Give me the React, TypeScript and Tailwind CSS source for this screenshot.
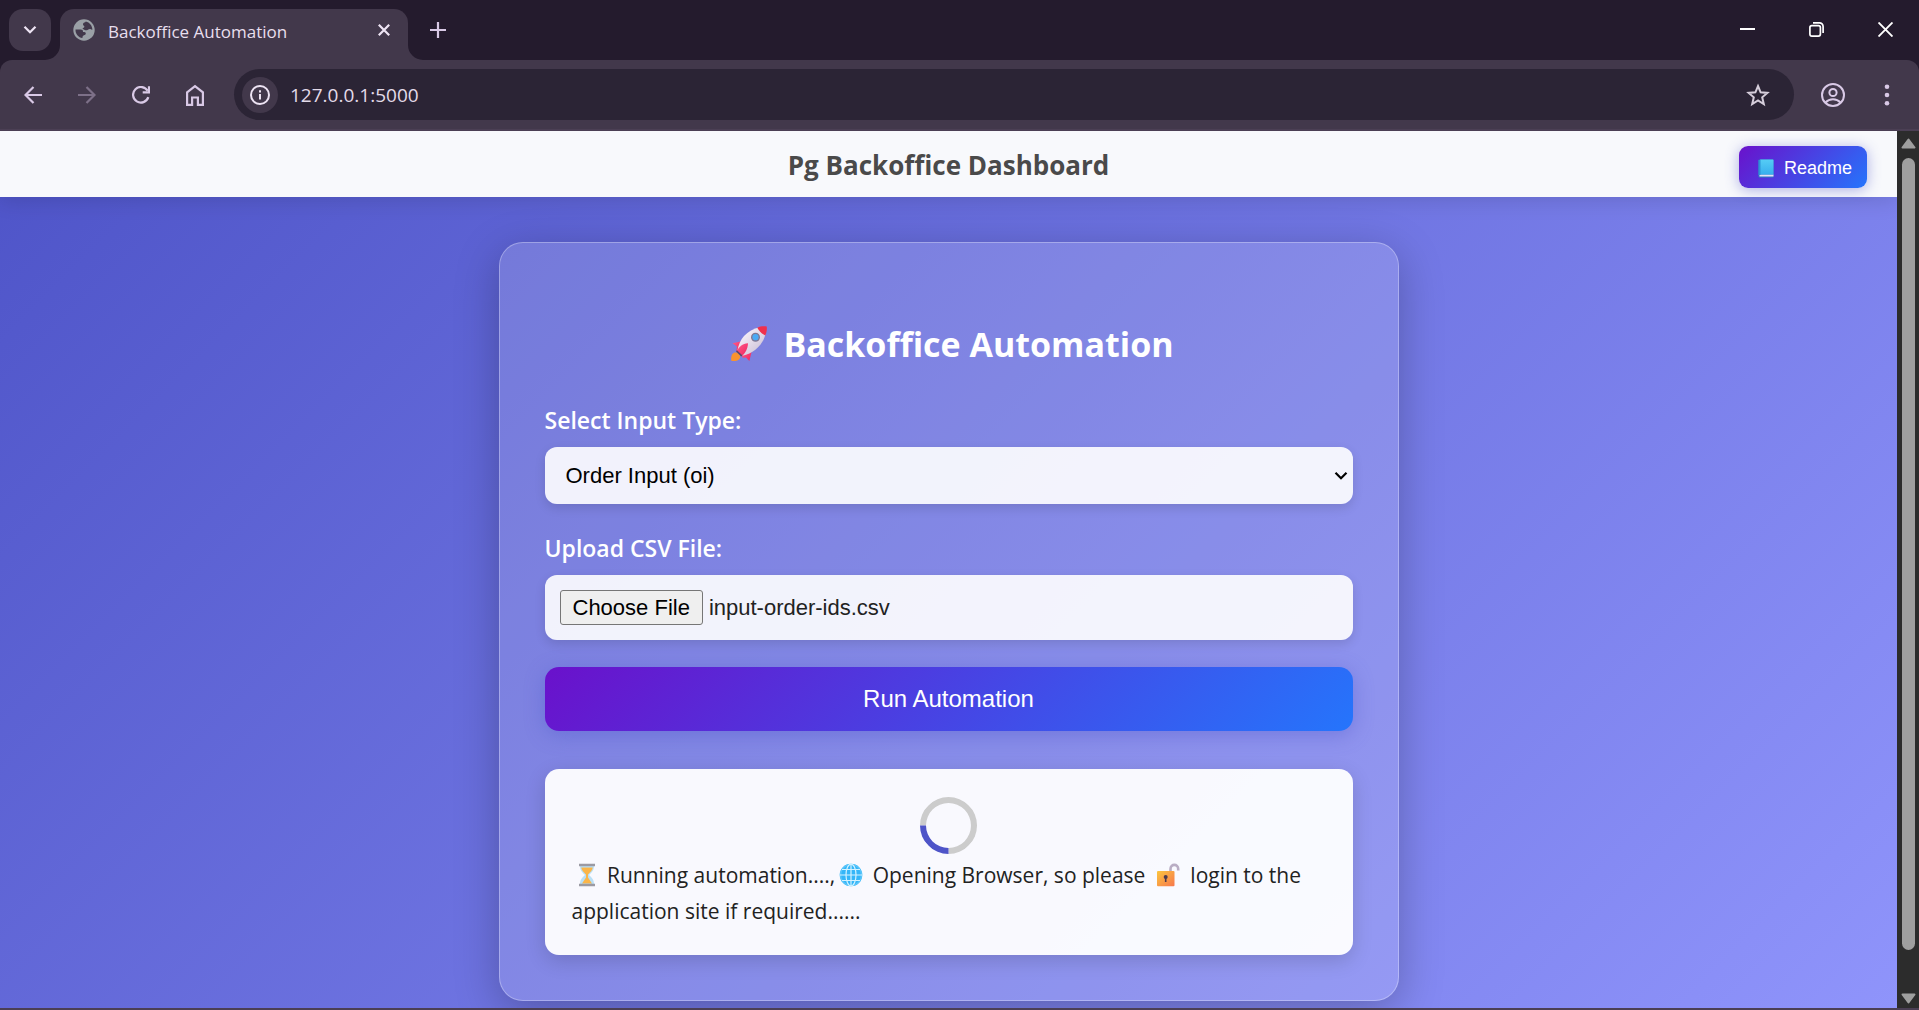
import { useEffect, useRef, type ReactNode } from "react";

const stroke = {
  fill: "none",
  stroke: "currentColor",
  strokeWidth: 2,
} as const;

function ChevronDown({ className }: { className: string }) {
  return (
    <svg viewBox="0 0 14 10" className={className} {...stroke} strokeWidth={2.2} aria-hidden="true">
      <path d="M1.500 1.700 7 7.200l5.500-5.500" />
    </svg>
  );
}

function GlobeFavicon() {
  return (
    <svg viewBox="0 0 22 22" className="size-[22px] shrink-0" aria-hidden="true">
      <circle cx="11" cy="11" r="10.700" fill="#9aa0a6" />
      <path
        d="M2.500 10.500c2.600 0 5.200 0 6.300.2 1 .3 1.200 1 1.200 2.300 1.500 0 3 .1 2.800 1.800-.1 1.200-1.800 1.300-2.600 1.900-.7.500-.7 1.500-.8 2.400C5.500 18.500 2.300 15 2.500 10.500Z"
        fill="#42384b"
      />
      <path
        d="M12.800 2.600c-.4 1.200-2.600 1-2.800 2.300-.2 1.500 1.200 1.500 1.400 2.700.2 1.500-1.800 1.100-1.900 2.400 1.600.2 2.400 1.700 4.200 1.300 1.500-.4 2-1.600 3.600-1.300.8.200 1.400.8 2.100.7-.1-3.700-2.700-7.300-6.600-8.100Z"
        fill="#42384b"
      />
    </svg>
  );
}

function RocketIcon() {
  return (
    <svg viewBox="0 0 36 36" className="size-9 shrink-0" aria-hidden="true">
      <defs>
        <linearGradient id="rocketBody" x1="0" y1="0" x2="1" y2="1">
          <stop offset="0.200" stopColor="#f6eff8" />
          <stop offset="1" stopColor="#c4b8d0" />
        </linearGradient>
        <linearGradient id="rocketFin" x1="0" y1="0" x2="1" y2="1">
          <stop offset="0" stopColor="#ff5c8a" />
          <stop offset="1" stopColor="#f0245f" />
        </linearGradient>
      </defs>
      <path d="M.3 34.800c-.5-3.300.1-7.300 3.200-8.200 2.600-.7 6.700 2.500 5.500 5.300C7.500 34.800 3.500 35.500.3 34.800Z" fill="#f8932f" />
      <path d="M1.500 17.300 9.500 15.500l2 3-4 7.500-2.200-1.200.7-4.300Z" fill="url(#rocketFin)" />
      <path d="M18.300 35 20.500 26.500l-3-2.500-7 5.200 1.200 2.600 3.300-.3Z" fill="url(#rocketFin)" />
      <path d="M6.500 24.500C8 13.500 15.500 4 29 1.200l5.800 5.500C32.500 18.500 23 27.500 11.500 29.700Z" fill="url(#rocketBody)" />
      <path d="M35.700.4C32 .1 28.800.4 26.300 1.700c1.700 3.300 4.700 6.200 8 7.700C35.600 6.700 36.100 3.500 35.700.4Z" fill="#f0304c" />
      <path d="M6 25c1.500-3.700 5.500-7.500 11-7.800-.2 5.300-2.500 9.800-6 12.500Z" fill="url(#rocketFin)" />
      <path d="m5 25.500 5.200 5 1.300-.9L6 24.300Z" fill="#5c4864" />
      <circle cx="24.500" cy="11.200" r="4.500" fill="#7f7793" />
      <circle cx="24.500" cy="11.200" r="3.100" fill="#4aaaf5" />
    </svg>
  );
}

function BookIcon() {
  return (
    <svg viewBox="0 0 16 19" className="h-[19px] w-4 shrink-0" aria-hidden="true">
      <defs>
        <linearGradient id="bookCover" x1="0" y1="0" x2="0" y2="1">
          <stop offset="0" stopColor="#55cdf5" />
          <stop offset="1" stopColor="#38aeee" />
        </linearGradient>
      </defs>
      <rect x="0.500" y="0.500" width="15" height="18" rx="1" fill="#2b7fc4" />
      <path d="M1.500 15.500h14v2h-14z" fill="#e6dff5" />
      <rect x="2" y="0.500" width="13.500" height="15" rx="0.600" fill="url(#bookCover)" />
      <path d="M.5 1h2v15h-2z" fill="#2d93d6" />
    </svg>
  );
}

function HourglassIcon() {
  return (
    <svg viewBox="0 0 24 24" className="mx-[3px] inline-block size-6 -translate-y-0.5 align-middle" aria-hidden="true">
      <path d="M5 2.500h14c0 5-2 6.500-5 9.500 3 3 5 4.500 5 9.500H5c0-5 2-6.500 5-9.500-3-3-5-4.500-5-9.500Z" fill="#b9e0f7" />
      <path d="M6.200 4.500h11.600c-.5 3-2.500 4.700-4.800 7v3l4 6h-10l4-6v-3c-2.300-2.300-4.300-4-4.800-7Z" fill="#fbb548" />
      <path d="M4 .8h16v2.400H4zM4 20.800h16v2.400H4z" fill="#9b9aa3" />
    </svg>
  );
}

function WebIcon() {
  return (
    <svg viewBox="0 0 24 24" className="mx-1 inline-block size-6 -translate-y-0.5 align-middle" aria-hidden="true">
      <circle cx="12" cy="12" r="11.300" fill="#35b6f8" />
      <g fill="none" stroke="#d3f2ff" strokeWidth="1.200">
        <circle cx="12" cy="12" r="10.500" stroke="#5cc6fa" />
        <ellipse cx="12" cy="12" rx="5" ry="10.800" />
        <path d="M12 1v22M1 12h22M3 6.500h18M3 17.500h18" />
      </g>
    </svg>
  );
}

function UnlockedIcon() {
  return (
    <svg viewBox="0 0 24 24" className="mx-[5px] inline-block size-6 -translate-y-0.5 align-middle" aria-hidden="true">
      <defs>
        <linearGradient id="lockBody" x1="0" y1="0" x2="1" y2="1">
          <stop offset="0" stopColor="#fbc63f" />
          <stop offset="1" stopColor="#f7774d" />
        </linearGradient>
      </defs>
      <path d="M14.500 9V6c0-5.500 7.700-5.500 7.700 0v1.500" fill="none" stroke="#b9adc4" strokeWidth="2.600" />
      <rect x="1" y="8" width="17.500" height="15.300" rx="1" fill="url(#lockBody)" />
      <circle cx="9.700" cy="14" r="2" fill="#4b3a4f" />
      <path d="M8.900 14.500h1.600v4.500h-1.600z" fill="#4b3a4f" />
    </svg>
  );
}

function ToolButton({ label, children, dim }: { label: string; children: ReactNode; dim?: boolean }) {
  return (
    <button
      aria-label={label}
      className={
        dim
          ? "flex size-[54px] items-center justify-center text-[#7d7088]"
          : "flex size-[54px] items-center justify-center text-[#d9c9e6]"
      }
    >
      {children}
    </button>
  );
}

function TabStrip() {
  return (
    <div className="flex h-[60px] items-start bg-[#241b2d] pl-[9px]">
      <button aria-label="Search tabs" className="mt-[9px] flex size-[42px] items-center justify-center rounded-[14px] bg-[#42384b] text-[#eee4f4]">
        <ChevronDown className="h-[10px] w-[14px]" />
      </button>
      <div className="relative mt-[9px] ml-[9px] flex h-[51px] w-[348px] items-center rounded-t-[14px] bg-[#42384b] pr-[14px] pb-[9px] pl-[13px]">
        <svg viewBox="0 0 15 15" className="absolute bottom-0 -left-[15px] size-[15px]" aria-hidden="true">
          <path d="M15 0v15H0A15 15 0 0 0 15 0Z" fill="#42384b" />
        </svg>
        <svg viewBox="0 0 15 15" className="absolute -right-[15px] bottom-0 size-[15px]" aria-hidden="true">
          <path d="M0 0v15h15A15 15 0 0 1 0 0Z" fill="#42384b" />
        </svg>
        <GlobeFavicon />
        <span className="ml-[13px] flex-1 pt-1 text-[17px] leading-6 whitespace-nowrap text-[#e8dfee]">Backoffice Automation</span>
        <button aria-label="Close tab" className="flex size-5 items-center justify-center text-[#eee4f4]">
          <svg viewBox="0 0 12 12" className="size-3" {...stroke} strokeWidth={2.200}>
            <path d="m.8.8 10.400 10.400M11.200.8.8 11.200" />
          </svg>
        </button>
      </div>
      <button aria-label="New tab" className="mt-[15px] ml-[15px] flex size-[30px] items-center justify-center text-[#d9c9e6]">
        <svg viewBox="0 0 16 16" className="size-4" {...stroke} strokeWidth={2.200}>
          <path d="M8 0v16M0 8h16" />
        </svg>
      </button>
      <div className="ml-auto flex text-white">
        <button aria-label="Minimize" className="flex h-[59px] w-[68px] items-center justify-center">
          <svg viewBox="0 0 15 15" className="size-[15px]" {...stroke}>
            <path d="M0 7h15" />
          </svg>
        </button>
        <button aria-label="Restore" className="flex h-[59px] w-[70px] items-center justify-center">
          <svg viewBox="0 0 15 15" className="size-[15px]" {...stroke} strokeWidth={1.700}>
            <rect x="0.900" y="3.600" width="10.500" height="10.500" rx="2" />
            <path d="M4 .9h6.500a3.600 3.600 0 0 1 3.600 3.600V11" />
          </svg>
        </button>
        <button aria-label="Close" className="flex h-[59px] w-[68px] items-center justify-center">
          <svg viewBox="0 0 15 15" className="size-[15px]" {...stroke} strokeWidth={1.900}>
            <path d="m.5.5 14 14M14.500.5l-14 14" />
          </svg>
        </button>
      </div>
    </div>
  );
}

function Toolbar() {
  return (
    <div className="bg-[#241b2d]">
      <div className="flex h-[71px] items-center rounded-t-[12px] border-b-2 border-[#4b3f54] bg-[#42384b] pl-[6px]">
        <ToolButton label="Back">
          <svg viewBox="0 0 18 18" className="size-[18px]" {...stroke} strokeWidth={2.200}>
            <path d="M18 9H1.800M9.500.9 1.500 9l8 8.100" />
          </svg>
        </ToolButton>
        <ToolButton label="Forward" dim>
          <svg viewBox="0 0 18 18" className="size-[18px]" {...stroke} strokeWidth={2.200}>
            <path d="M0 9h16.200M8.500.9l8 8.100-8 8.100" />
          </svg>
        </ToolButton>
        <ToolButton label="Reload">
          <svg viewBox="0 0 18 18" className="size-[18px]" {...stroke} strokeWidth={2.200}>
            <path d="M16.300 11.200A7.800 7.800 0 1 1 15.600 4.800M17 .2v6.200h-6.300" />
          </svg>
        </ToolButton>
        <ToolButton label="Home">
          <svg viewBox="0 0 20 22" className="h-[22px] w-5" {...stroke} strokeWidth={2.200}>
            <path d="M2.100 8.300 10 2.100l7.900 6.200v12.600h-5V13.500H7.100v7.400h-5Z" />
          </svg>
        </ToolButton>
        <div className="ml-3 flex h-[51px] flex-1 items-center rounded-full bg-[#2b2435] pr-6 pl-2">
          <button aria-label="View site information" className="flex size-9 items-center justify-center rounded-full bg-[#42384b] text-[#eee4f4]">
            <svg viewBox="0 0 20 20" className="size-5" {...stroke}>
              <circle cx="10" cy="10" r="9" />
              <path d="M10 9v5.500M10 5.200v2.200" />
            </svg>
          </button>
          <input
            aria-label="Address"
            defaultValue="127.0.0.1:5000"
            className="ml-3 min-w-0 flex-1 bg-transparent text-[19px] leading-7 text-[#e3dbe9] outline-none"
          />
          <button aria-label="Bookmark this tab" className="flex size-6 items-center justify-center text-[#d6cedb]">
            <svg viewBox="0 0 24 24" className="size-6" {...stroke} strokeWidth={2}>
              <path d="m12 3 2.600 6.300 6.800.6-5.200 4.400 1.600 6.700-5.800-3.600L6.200 21l1.600-6.700-5.200-4.400 6.800-.6Z" />
            </svg>
          </button>
        </div>
        <button aria-label="Profile" className="ml-[27px] flex size-6 items-center justify-center text-[#d9c9e6]">
          <svg viewBox="0 0 24 24" className="size-6" {...stroke}>
            <circle cx="12" cy="12" r="11" />
            <circle cx="12" cy="9.500" r="3.600" />
            <path d="M4.500 19.500c4-4.400 11-4.400 15 0" />
          </svg>
        </button>
        <button aria-label="Customize and control" className="mr-[10px] ml-5 flex h-6 w-[44px] items-center justify-center text-[#d9c9e6]">
          <svg viewBox="0 0 6 22" className="h-[22px] w-[6px]" fill="currentColor">
            <circle cx="3" cy="2.800" r="2.300" />
            <circle cx="3" cy="11" r="2.300" />
            <circle cx="3" cy="19.200" r="2.300" />
          </svg>
        </button>
      </div>
    </div>
  );
}

function AutomationForm() {
  const fileInput = useRef<HTMLInputElement>(null);

  useEffect(() => {
    if (!fileInput.current) return;
    const selection = new DataTransfer();
    selection.items.add(new File([""], "input-order-ids.csv", { type: "text/csv" }));
    fileInput.current.files = selection.files;
  }, []);

  return (
    <form
      onSubmit={(event) => event.preventDefault()}
      className="mx-auto flex w-full max-w-[900px] flex-col rounded-[24px] border border-white/30 bg-white/15 px-[45px] pt-[77px] pb-[45px] shadow-[0_11px_44px_rgba(0,0,0,0.25)]"
    >
      <h2 className="flex items-center justify-center gap-4 pl-2 text-[34px] leading-12 font-bold whitespace-nowrap text-white">
        <RocketIcon />
        Backoffice Automation
      </h2>

      <label htmlFor="input-type" className="mt-9 mb-[11px] text-[23px] leading-8 font-semibold text-white">
        Select Input Type:
      </label>
      <div className="relative">
        <select
          id="input-type"
          className="block h-[57px] w-full appearance-none rounded-xl bg-white/90 px-[21px] font-['Liberation_Sans',Arial,sans-serif] text-[22px] text-black shadow-[0_4px_11px_rgba(0,0,0,0.12)]"
        >
          <option>Order Input (oi)</option>
        </select>
        <ChevronDown className="pointer-events-none absolute top-[24px] right-[5px] h-[10px] w-[14px] text-black" />
      </div>

      <label htmlFor="csv-file" className="mt-7 mb-[11px] text-[23px] leading-8 font-semibold text-white">
        Upload CSV File:
      </label>
      <input
        ref={fileInput}
        id="csv-file"
        type="file"
        accept=".csv"
        className="h-[65px] w-full rounded-xl bg-white/90 p-[15px] font-['Liberation_Sans',Arial,sans-serif] text-[22px] leading-[35px] text-[#222222] shadow-[0_4px_11px_rgba(0,0,0,0.12)] file:mr-[6px] file:h-[35px] file:rounded-[3px] file:border file:border-solid file:border-[#767676] file:bg-[#efefef] file:px-3 file:text-[22px] file:leading-[31px] file:text-black"
      />

      <button
        type="submit"
        className="mt-[27px] h-16 w-full rounded-[14px] bg-[linear-gradient(135deg,#6a11cb,#2575fc)] font-['Liberation_Sans',Arial,sans-serif] text-[24px] text-white shadow-[0_4px_20px_rgba(78,84,200,0.4)]"
      >
        Run Automation
      </button>

      <div className="mt-[38px] rounded-[14px] bg-white/95 px-[27px] pt-7 pb-[26px] text-[21px] leading-9 text-[#222222] shadow-[0_6px_20px_rgba(0,0,0,0.15)]">
        <div className="mx-auto mb-[3px] size-[57px] -rotate-45 rounded-full border-6 border-[#cccccc] border-l-[#4e54c8]" role="status" aria-label="Running" />
        <p>
          <HourglassIcon /> <span>Running automation....,</span>
          <WebIcon /> <span>Opening Browser, so please</span> <UnlockedIcon /> <span>login to the</span>{" "}
          <span>application site if required......</span>
        </p>
      </div>
    </form>
  );
}

function ScrollBar() {
  return (
    <div className="flex w-[22px] shrink-0 flex-col items-center bg-[#2c2c2c] pt-[7px] pb-1" aria-hidden="true">
      <svg viewBox="0 0 15 11" className="h-[11px] w-[15px]">
        <path d="M7.500 1.500 13.500 9.500h-12Z" fill="#9f9f9f" stroke="#9f9f9f" strokeWidth="2" strokeLinejoin="round" />
      </svg>
      <div className="mt-[9px] mb-[43px] w-[13px] flex-1 rounded-full bg-[#9f9f9f]" />
      <svg viewBox="0 0 15 11" className="h-[11px] w-[15px]">
        <path d="M7.500 9.500 13.500 1.500h-12Z" fill="#9f9f9f" stroke="#9f9f9f" strokeWidth="2" strokeLinejoin="round" />
      </svg>
    </div>
  );
}

export default function App() {
  return (
    <div className="flex h-screen flex-col overflow-hidden border-b-2 border-[#4b3f54] font-['Open_Sans','Noto_Sans',sans-serif]">
      <TabStrip />
      <Toolbar />
      <div className="flex min-h-0 flex-1">
        <div className="flex min-w-0 flex-1 flex-col overflow-hidden bg-[linear-gradient(135deg,#4e54c8,#8f94fb)]">
          <header className="relative z-10 grid shrink-0 grid-cols-[1fr_auto_1fr] items-center bg-[#f8f9fc] px-[30px] pt-[15px] pb-[9px] shadow-[0_4px_20px_rgba(0,0,0,0.12)]">
            <h1 className="col-start-2 -mt-1 text-[26px] leading-8 font-bold whitespace-nowrap text-[#4a4a4a]">Pg Backoffice Dashboard</h1>
            <button className="flex h-[42px] items-center gap-[10px] justify-self-end rounded-[9px] bg-[linear-gradient(135deg,#6a11cb,#2575fc)] pt-0.5 pr-[15px] pl-[19px] font-['Liberation_Sans',Arial,sans-serif] text-[18px] text-white shadow-[0_2px_14px_rgba(78,84,200,0.45)]">
              <BookIcon />
              Readme
            </button>
          </header>
          <main className="px-6 pt-[45px]">
            <AutomationForm />
          </main>
        </div>
        <ScrollBar />
      </div>
    </div>
  );
}
